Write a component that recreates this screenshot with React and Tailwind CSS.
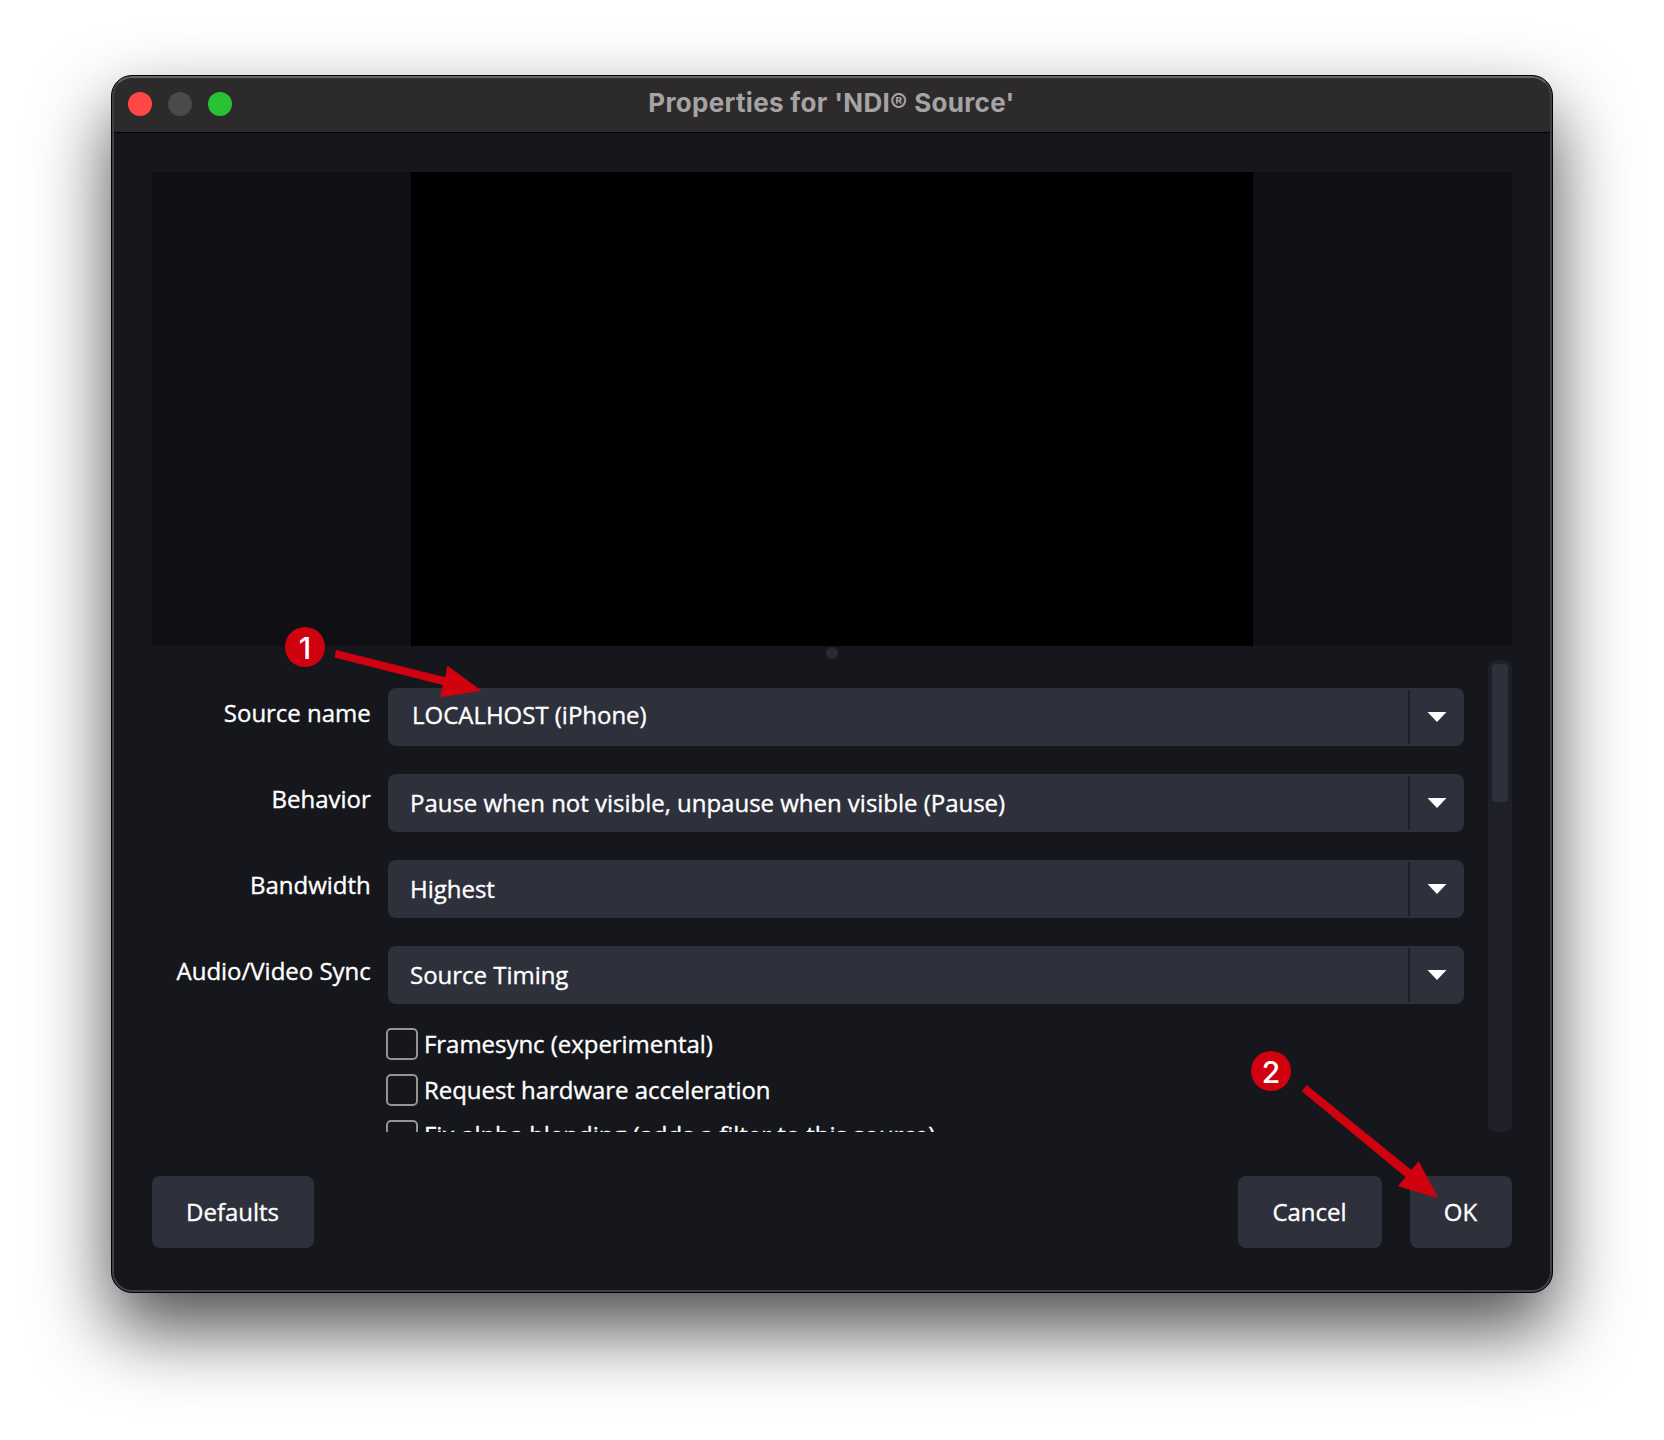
const fields = [
  { label: "Source name", value: "LOCALHOST (iPhone)", text: "pl-6 pb-1" },
  { label: "Behavior", value: "Pause when not visible, unpause when visible (Pause)", text: "pl-[22px]" },
  { label: "Bandwidth", value: "Highest", text: "pl-[22px]" },
  { label: "Audio/Video Sync", value: "Source Timing", text: "pl-[22px]" },
];

const options = [
  { label: "Framesync (experimental)", text: "" },
  { label: "Request hardware acceleration", text: "" },
  { label: "Fix alpha blending (adds a filter to this source)", text: "pb-0.5" },
];

function Field({ label, value, text }) {
  return (
    <div className="flex h-[58px] items-center">
      <div className="mr-[17px] w-[219px] pr-[0.3px] pb-[9px] text-right">{label}</div>
      <div className="flex h-[58px] w-[1076px] items-center rounded-lg bg-[#2e303b]">
        <div className={"flex-1 " + text}>{value}</div>
        <div className="h-[54px] w-0.5 bg-[#1f1f28]" />
        <div className="flex w-[54px] justify-center pr-px">
          <svg width="20" height="10" viewBox="0 0 20 10">
            <path d="M0.5 0H19.5L10 10Z" fill="#fff" />
          </svg>
        </div>
      </div>
    </div>
  );
}

function Button({ children, className }) {
  return (
    <button className={"flex h-[72px] items-center justify-center rounded-lg bg-[#2e303b] pr-px " + className}>
      {children}
    </button>
  );
}

export default function App() {
  return (
    <div className="relative h-[1440px] w-[1664px] overflow-hidden bg-white pt-[75px] pl-[111px] font-['Open_Sans',sans-serif] text-2xl tracking-[-0.02px] text-white [-webkit-text-stroke:0.35px]">
      <div className="h-[1218px] w-[1442px] rounded-[21px] border border-black bg-[#16171c] shadow-[0_36px_76px_rgba(0,0,0,0.7)]">
        <div className="relative flex h-full w-full flex-col overflow-hidden rounded-[20px]">
          <header className="flex h-[57px] shrink-0 items-center border-b border-black bg-[#2d2a2b] pl-4">
            <div className="flex gap-4">
              <div className="size-6 rounded-full bg-[#ff4745]" />
              <div className="size-6 rounded-full bg-[#4a4a4a]" />
              <div className="size-6 rounded-full bg-[#28c234]" />
            </div>
            <h1 className="mr-[121px] flex-1 pb-0.5 text-center font-['Inter',sans-serif] text-[26px] leading-8 font-bold tracking-[0.32px] text-[#a5a3a3] [-webkit-text-stroke:0px]">
              Properties for 'NDI® Source'
            </h1>
          </header>
          <main className="flex flex-col px-10 pt-[39px]">
            <div className="flex h-[474px] justify-center bg-[#100f14]">
              <div className="w-[842px] bg-black" />
            </div>
            <div className="flex h-[14px] items-center justify-center">
              <div className="size-3 rounded-full bg-[#292a2f]" />
            </div>
            <div className="flex h-[472px] justify-between">
              <div className="flex flex-col overflow-hidden pt-7">
                <div className="flex flex-col gap-7">
                  {fields.map((f) => (
                    <Field key={f.label} {...f} />
                  ))}
                </div>
                <div className="mt-6 flex flex-col gap-3.5 pl-[234px]">
                  {options.map((o) => (
                    <label key={o.label} className="flex h-8 shrink-0 items-center gap-1.5">
                      <span className="size-8 rounded-[5px] border-2 border-[#949498]" />
                      <span className={"tracking-[-0.04px] " + o.text}>{o.label}</span>
                    </label>
                  ))}
                </div>
              </div>
              <div className="w-6 rounded-lg bg-[#1f1f27] p-1">
                <div className="h-[138px] rounded bg-[#2e303b]" />
              </div>
            </div>
            <div className="mt-11 flex">
              <Button className="w-[162px]">Defaults</Button>
              <Button className="ml-auto w-[144px]">Cancel</Button>
              <Button className="ml-7 w-[102px]">OK</Button>
            </div>
          </main>
          <div className="pointer-events-none absolute inset-0 rounded-[20px] border-2 border-[#404145] border-t-[#666564]" />
        </div>
      </div>
      <svg className="absolute top-0 left-0" width="1664" height="1440" viewBox="0 0 1664 1440" fill="#d0020f">
        <path d="M336 650L445.3 677.3L447.3 665.5L481.5 690.7L440 697.3L442.8 685L334.5 657.5Z" />
        <path d="M1306.7 1085L1411.3 1170L1418.7 1161.3L1438.3 1198.3L1398 1186.3L1405.5 1177L1301.7 1091.3Z" />
      </svg>
      <div className="absolute top-[627px] left-[285px] flex size-10 items-center justify-center rounded-full bg-[#d0020f] pt-[3px] font-['Inter',sans-serif] text-[30px] font-medium [-webkit-text-stroke:0px]">
        1
      </div>
      <div className="absolute top-[1051px] left-[1251px] flex size-10 items-center justify-center rounded-full bg-[#d0020f] pt-[3px] font-['Inter',sans-serif] text-[30px] font-medium [-webkit-text-stroke:0px]">
        2
      </div>
    </div>
  );
}
